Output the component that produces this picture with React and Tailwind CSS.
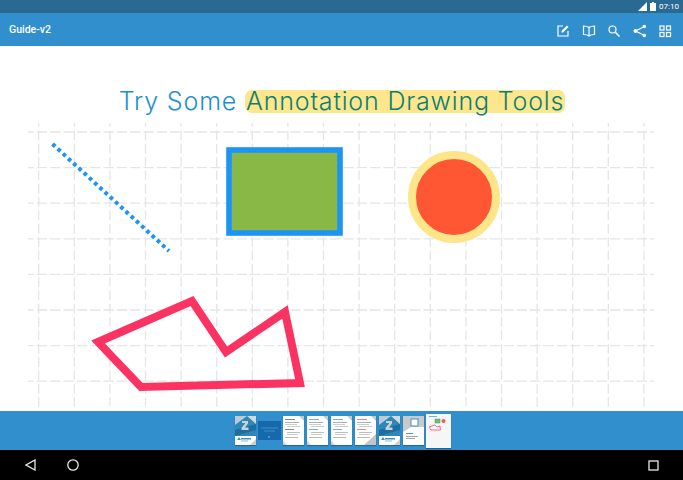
import React from "react";

const hLines = [132, 167.6, 203.2, 238.8, 274.4, 310, 345.6, 381.2];
const vLines = [38.7, 74.3, 109.9, 145.5, 181.1, 216.7, 252.3, 287.9, 323.5, 359.1, 394.7, 430.3, 465.9, 501.5, 537.1, 572.7, 608.3, 643.9];

function ToolIcon({ children }) {
  return (
    <svg width="14" height="14" viewBox="0 0 14 14" fill="none" stroke="white" strokeWidth="1.2" className="block">
      {children}
    </svg>
  );
}

function Page({ children }) {
  return (
    <svg width="21" height="29" viewBox="0 0 21 29" className="block bg-white shadow-[0_1px_1px_rgba(0,0,0,0.25)]">
      {children}
    </svg>
  );
}

function CoverThumb() {
  return (
    <Page>
      <rect width="21" height="20" fill="#2f87b5" />
      <path d="M0 0h12L0 9z" fill="#b9cbd4" />
      <path d="M12 0h9v8z" fill="#cfd9de" />
      <path d="M0 14l21-6v6L0 20z" fill="#1f6f9e" />
      <path d="M7 5h6v2.500l-3 4h3.500V14h-7v-2l3.500-4.500V7H7z" fill="#c4d3db" />
      <rect x="6" y="22" width="10" height="1.500" fill="#3a93c9" />
      <rect x="6" y="24.500" width="7" height="1" fill="#8fb9d4" />
      <path d="M2 24l2-3 2 3z" fill="#3a93c9" />
      <path d="M15 29l6-6v6z" fill="#cfcfcf" />
    </Page>
  );
}

function TextThumb({ accent, corner }) {
  return (
    <Page>
      <path d="M16 0h5v5z" fill="#c8c8c8" />
      <rect x="2" y="3" width="10" height="1" fill={accent} opacity="0.8" />
      <rect x="2" y="6" width="14" height="1" fill="#b0b0b0" />
      <rect x="2" y="8" width="12" height="1" fill="#cccccc" />
      <rect x="4" y="10" width="13" height="1" fill="#cccccc" />
      <rect x="2" y="13" width="9" height="1" fill={accent} opacity="0.8" />
      <rect x="4" y="16" width="13" height="1" fill="#bdbdbd" />
      <rect x="4" y="18" width="11" height="1" fill="#cccccc" />
      <rect x="2" y="21" width="13" height="1" fill="#b8b8b8" />
      {corner ? <path d="M9 29l12-11v11z" fill="#c4c4c4" /> : <path d="M0 29v-4l4 4z" fill="#d0d0d0" />}
    </Page>
  );
}

function App() {
  return (
    <div className="w-[683px] h-[480px] flex flex-col overflow-hidden bg-white font-['Roboto',sans-serif]">
      {/* status bar */}
      <div className="h-[13px] bg-[#2a6a92] flex items-center justify-end pr-[4px] text-white">
        <svg width="9" height="9" viewBox="0 0 9 9" className="block mr-[3px]">
          <path d="M9 0v9H0z" fill="white" />
        </svg>
        <svg width="6" height="9" viewBox="0 0 6 9" className="block mr-[3px]">
          <path d="M2 0h2v1h2v8H0V1h2z" fill="white" />
        </svg>
        <span className="text-[8px] leading-none">07:10</span>
      </div>

      {/* toolbar */}
      <div className="h-[33px] bg-[#318fce] flex items-center justify-between pl-[9px] pr-[11px]">
        <span className="text-white text-[10.5px] font-medium">Guide-v2</span>
        <div className="flex items-center gap-[11.500px] pt-[2px]">
          <ToolIcon>
            <path d="M7 2H2v10h10V7" />
            <path d="M5.500 8.500V7L11 1.500l1.500 1.500L7 8.500z" fill="white" stroke="none" />
          </ToolIcon>
          <ToolIcon>
            <path d="M7 3.500C5.500 2.300 3.500 2 1.500 2v8.500c2 0 4 .3 5.500 1.500 1.500-1.200 3.500-1.500 5.500-1.500V2c-2 0-4 .3-5.500 1.500z" />
            <path d="M7 3.500V12" />
          </ToolIcon>
          <ToolIcon>
            <circle cx="5.500" cy="5.500" r="3.500" />
            <path d="M8.500 8.500L12.500 12.500" strokeWidth="1.600" />
          </ToolIcon>
          <svg width="14" height="14" viewBox="0 0 14 14" fill="white" stroke="white" className="block">
            <path d="M11.500 2.500L2.500 7l9 4.500" fill="none" strokeWidth="1.200" />
            <circle cx="11.300" cy="2.500" r="1.800" stroke="none" />
            <circle cx="2.500" cy="7" r="2" stroke="none" />
            <circle cx="11.300" cy="11.500" r="1.800" stroke="none" />
          </svg>
          <ToolIcon>
            <rect x="2" y="2" width="4" height="4" />
            <rect x="8.500" y="2" width="4" height="4" />
            <rect x="2" y="8.500" width="4" height="4" />
            <rect x="8.500" y="8.500" width="4" height="4" />
          </ToolIcon>
        </div>
      </div>

      {/* page */}
      <div className="flex-1 flex flex-col bg-white">
        <div className="h-[74px] flex items-end justify-center pb-[7px] pl-[1px]">
          <h1 className="text-[25px] leading-[23px] font-['Inter',sans-serif] font-light tracking-[0.83px] text-[#1a8fd1] whitespace-nowrap">
            Try Some{" "}
            <span className="inline-block bg-[#fde68c] text-[#0b7f76] rounded-[7px] pl-[1px] pr-[1px]">
              Annotation Drawing Tools
            </span>
          </h1>
        </div>
        <svg width="683" height="291" viewBox="0 120 683 291" className="block">
          <g stroke="#e5e5e5" strokeWidth="1.300" fill="none">
            {hLines.map((y) => (
              <line key={y} x1="28" x2="654" y1={y} y2={y} strokeDasharray="10.300 3.030" strokeDashoffset="4.500" />
            ))}
            {vLines.map((x) => (
              <line key={x} x1={x} x2={x} y1="123" y2="409" strokeDasharray="9.500 3.830" strokeDashoffset="5.700" />
            ))}
          </g>
          <line x1="52.500" y1="144" x2="169" y2="251" stroke="#1b94f5" strokeWidth="4" strokeDasharray="3.700 3.400" />
          <rect x="229" y="150" width="111" height="83" fill="#8ab847" stroke="#1b94f5" strokeWidth="5.600" />
          <circle cx="454" cy="197" r="42" fill="#ff5733" stroke="#fde68a" strokeWidth="8" />
          <path d="M98 342L192 301L226 352L285 312L300 383L141 387Z" fill="none" stroke="#fb3363" strokeWidth="8" strokeLinejoin="miter" />
        </svg>
      </div>

      {/* thumbnails */}
      <div className="h-[39px] bg-[#318fce] flex items-center justify-center gap-[3px] pl-[3px]">
        <CoverThumb />
        <svg width="23" height="19" viewBox="0 0 23 19" className="block -mx-[1px]">
          <rect width="23" height="19" fill="#1769ae" />
          <path d="M3 7h17M6 10h11" stroke="#3f8fcc" strokeWidth="1" />
          <circle cx="11" cy="16" r="1" fill="#5aa6dc" />
        </svg>
        <TextThumb accent="#6a6a6a" />
        <TextThumb accent="#4f9bd0" />
        <TextThumb accent="#4f9bd0" />
        <TextThumb accent="#e0685c" corner />
        <CoverThumb />
        <Page>
          <path d="M0 0h21v11H8L0 16z" fill="#c9c9c9" />
          <rect x="8" y="3" width="7" height="7" fill="white" stroke="#3a93c9" />
          <rect x="3" y="17" width="7" height="1" fill="#4f9bd0" />
          <rect x="3" y="20" width="12" height="1" fill="#a5a5a5" />
          <rect x="3" y="22" width="9" height="1" fill="#a5a5a5" />
        </Page>
        <svg width="25" height="34" viewBox="0 0 25 34" className="block -ml-[1px] bg-[#f6f6f6] shadow-[0_1px_1px_rgba(0,0,0,0.3)]">
          <rect x="3" y="2" width="8" height="1" fill="#6fb2dc" />
          <rect x="9" y="5" width="5" height="4" fill="#8bb84a" stroke="#2196f3" strokeWidth="0.500" />
          <circle cx="17.500" cy="7" r="2" fill="#ff5733" />
          <path d="M3 13l6-2 2 2 3-1 0.500 4H5z" fill="none" stroke="#fb3363" strokeWidth="0.700" />
        </svg>
      </div>

      {/* nav bar */}
      <div className="h-[30px] bg-black flex items-center justify-between pl-[25px] pr-[24px]">
        <div className="flex items-center gap-[31px]">
          <svg width="11" height="12" viewBox="0 0 11 12" fill="none" stroke="#e8e8e8" strokeWidth="1.300" className="block">
            <path d="M10 1v10L1 6z" />
          </svg>
          <svg width="12" height="12" viewBox="0 0 12 12" fill="none" stroke="#e8e8e8" strokeWidth="1.300" className="block">
            <circle cx="6" cy="6" r="5.200" />
          </svg>
        </div>
        <svg width="11" height="11" viewBox="0 0 11 11" fill="none" stroke="#e8e8e8" strokeWidth="1.300" className="block">
          <rect x="1" y="1" width="9" height="9" />
        </svg>
      </div>
    </div>
  );
}

export default App;
